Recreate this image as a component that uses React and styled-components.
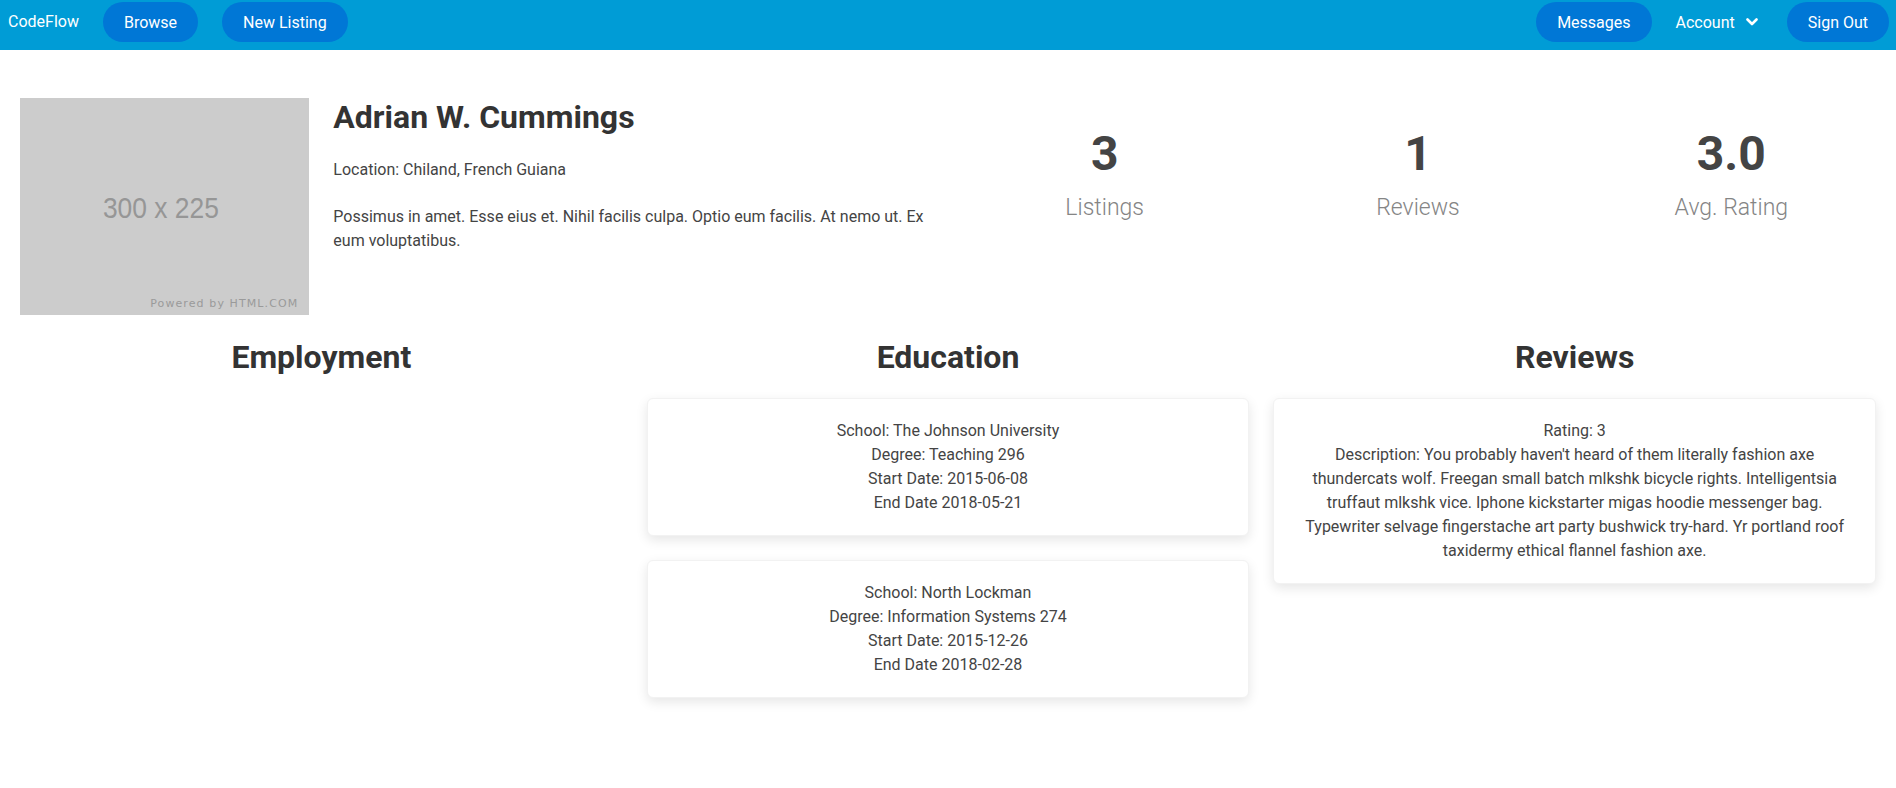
import React from "react";
import styled, { createGlobalStyle } from "styled-components";

const GlobalStyle = createGlobalStyle`
  html, body { margin: 0; padding: 0; background: #fff; }
  body {
    font-family: Roboto, "Liberation Sans", Arial, sans-serif;
    color: #444;
    font-size: 16px;
    line-height: 1.5;
  }
  * { box-sizing: border-box; }
`;

const NavBar = styled.nav`
  display: flex;
  justify-content: space-between;
  align-items: flex-start;
  height: 50px;
  padding: 2px 7px 0 8px;
  background: #009cd6;
`;

const NavGroup = styled.div`
  display: flex;
  align-items: center;
  gap: 24px;
`;

const Brand = styled.span`
  display: inline-flex;
  align-items: center;
  height: 40px;
  color: #fff;
  font-size: 16px;
`;

const NavButton = styled.button`
  display: inline-flex;
  align-items: center;
  gap: 11px;
  height: 40px;
  padding: ${(p) => (p.$plain ? "0 5px 0 0" : "0 21px")};
  border: none;
  border-radius: 20px;
  background: ${(p) => (p.$plain ? "transparent" : "#0077d6")};
  color: #fff;
  font-family: Roboto, "Liberation Sans", Arial, sans-serif;
  font-size: 16px;
  cursor: pointer;
`;

const Main = styled.main`
  padding: 48px 8px 40px;
`;

const TopRow = styled.section`
  display: grid;
  grid-template-columns: 2fr 4fr 6fr;
  align-items: start;
`;

const Col = styled.div`
  padding: 0 12px;
`;

const Placeholder = styled.div`
  position: relative;
  width: 100%;
  aspect-ratio: 300 / 225;
  background: #cccccc;
  display: flex;
  align-items: center;
  justify-content: center;
`;

const PlaceholderSize = styled.span`
  font-family: "Liberation Sans", Arial, sans-serif;
  font-size: 30px;
  color: #969696;
  transform: scaleX(0.88);
  margin: 2px 8px 0 0;
`;

const PoweredBy = styled.span`
  position: absolute;
  right: 11px;
  bottom: 6px;
  font-family: "DejaVu Sans", Verdana, sans-serif;
  font-size: 11px;
  letter-spacing: 1.1px;
  color: #9a9a9a;
  line-height: 1;
`;

const Name = styled.h1`
  margin: 0 0 22px;
  font-size: 32px;
  line-height: 1.2;
  font-weight: 700;
  color: #333;
`;

const Para = styled.p`
  margin: 0 0 23px;
  font-size: 16px;
  line-height: 24px;
  color: #444;
`;

const Stats = styled.div`
  display: grid;
  grid-template-columns: repeat(3, 1fr);
  margin-top: 27px;
`;

const Stat = styled.div`
  display: flex;
  flex-direction: column;
  align-items: center;
`;

const StatValue = styled.span`
  font-size: 48px;
  line-height: 1.2;
  font-weight: 700;
  color: #444;
`;

const StatLabel = styled.span`
  margin-top: 7px;
  font-family: "Roboto Light", Roboto, "Liberation Sans", Arial, sans-serif;
  font-size: 23px;
  line-height: 36px;
  font-weight: 300;
  color: #858585;
`;

const BottomRow = styled.section`
  display: grid;
  grid-template-columns: repeat(3, 1fr);
  margin-top: 23px;
`;

const SectionCol = styled.div`
  padding: 0 12px;
  display: flex;
  flex-direction: column;
  gap: 24px;
`;

const SectionTitle = styled.h2`
  margin: 0 0 -2px;
  text-align: center;
  font-size: 32px;
  line-height: 1.2;
  font-weight: 700;
  color: #333;
`;

const Card = styled.div`
  padding: 20px;
  border: 1px solid #f2f2f2;
  border-radius: 6px;
  background: #fff;
  box-shadow: 0 4px 12px rgba(0, 0, 0, 0.1);
  text-align: center;
  font-size: 16px;
  line-height: 24px;
  color: #444;
`;

const Line = styled.div``;

const Chevron = () => (
  <svg width="12" height="8" viewBox="0 0 12 8" aria-hidden="true">
    <polyline
      points="1.5,1.5 6,6 10.5,1.5"
      fill="none"
      stroke="#fff"
      strokeWidth="2.6"
      strokeLinecap="round"
      strokeLinejoin="round"
    />
  </svg>
);

const education = [
  {
    school: "The Johnson University",
    degree: "Teaching 296",
    start: "2015-06-08",
    end: "2018-05-21",
  },
  {
    school: "North Lockman",
    degree: "Information Systems 274",
    start: "2015-12-26",
    end: "2018-02-28",
  },
];

const stats = [
  { value: "3", label: "Listings" },
  { value: "1", label: "Reviews" },
  { value: "3.0", label: "Avg. Rating" },
];

export default function App() {
  return (
    <>
      <GlobalStyle />
      <NavBar>
        <NavGroup>
          <Brand>CodeFlow</Brand>
          <NavButton>Browse</NavButton>
          <NavButton>New Listing</NavButton>
        </NavGroup>
        <NavGroup>
          <NavButton>Messages</NavButton>
          <NavButton $plain>
            Account <Chevron />
          </NavButton>
          <NavButton>Sign Out</NavButton>
        </NavGroup>
      </NavBar>
      <Main>
        <TopRow>
          <Col>
            <Placeholder>
              <PlaceholderSize>300 x 225</PlaceholderSize>
              <PoweredBy>Powered by HTML.COM</PoweredBy>
            </Placeholder>
          </Col>
          <Col>
            <Name>Adrian W. Cummings</Name>
            <Para>Location: Chiland, French Guiana</Para>
            <Para>
              Possimus in amet. Esse eius et. Nihil facilis culpa. Optio eum
              facilis. At nemo ut. Ex eum voluptatibus.
            </Para>
          </Col>
          <Stats>
            {stats.map((s) => (
              <Stat key={s.label}>
                <StatValue>{s.value}</StatValue>
                <StatLabel>{s.label}</StatLabel>
              </Stat>
            ))}
          </Stats>
        </TopRow>
        <BottomRow>
          <SectionCol>
            <SectionTitle>Employment</SectionTitle>
          </SectionCol>
          <SectionCol>
            <SectionTitle>Education</SectionTitle>
            {education.map((e) => (
              <Card key={e.school}>
                <Line>School: {e.school}</Line>
                <Line>Degree: {e.degree}</Line>
                <Line>Start Date: {e.start}</Line>
                <Line>End Date {e.end}</Line>
              </Card>
            ))}
          </SectionCol>
          <SectionCol>
            <SectionTitle>Reviews</SectionTitle>
            <Card>
              <Line>Rating: 3</Line>
              <Line>
                Description: You probably haven't heard of them literally
                fashion axe thundercats wolf. Freegan small batch mlkshk bicycle
                rights. Intelligentsia truffaut mlkshk vice. Iphone kickstarter
                migas hoodie messenger bag. Typewriter selvage fingerstache art
                party bushwick try-hard. Yr portland roof taxidermy ethical
                flannel fashion axe.
              </Line>
            </Card>
          </SectionCol>
        </BottomRow>
      </Main>
    </>
  );
}
